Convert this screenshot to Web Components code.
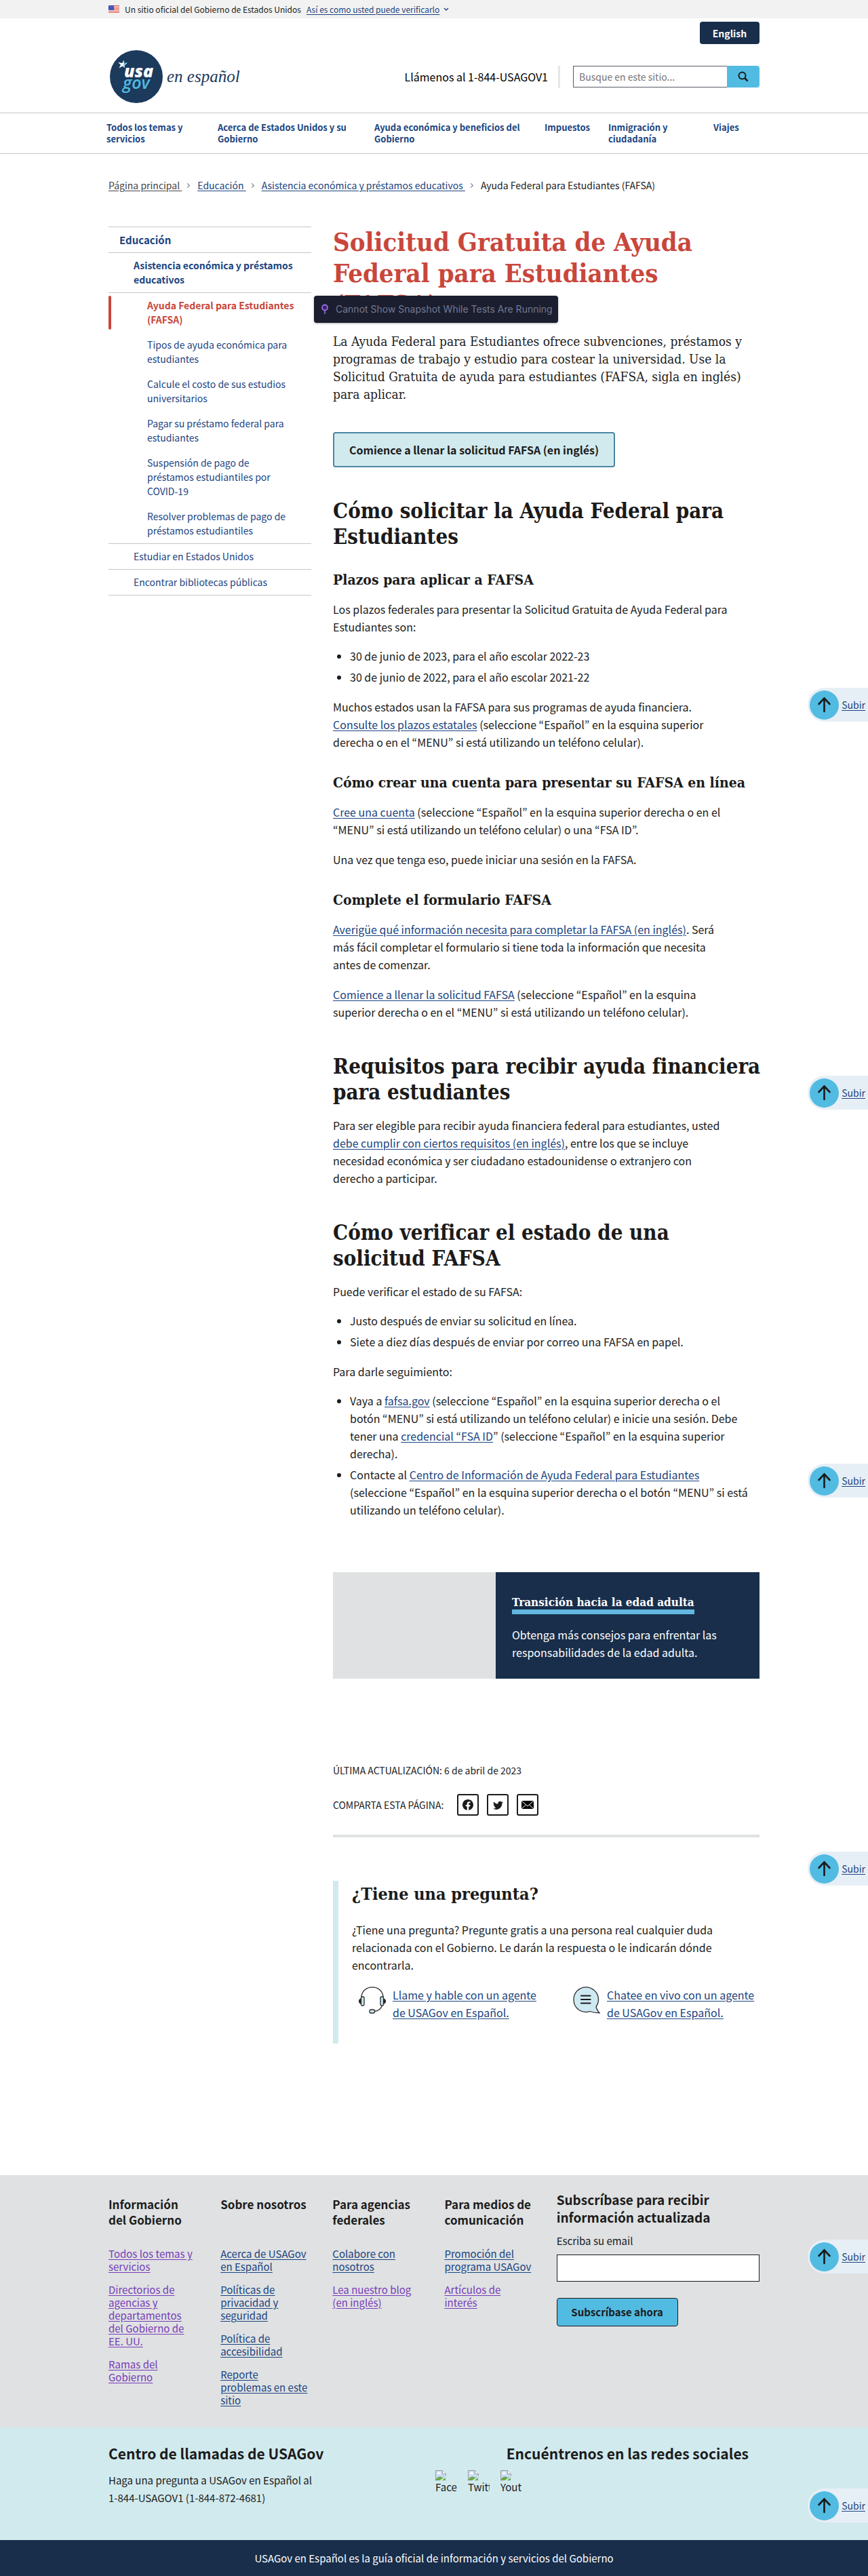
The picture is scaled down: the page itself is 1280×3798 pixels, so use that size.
<!DOCTYPE html>
<html lang="es">
<head>
<meta charset="utf-8">
<title>Solicitud Gratuita de Ayuda Federal para Estudiantes (FAFSA) | USAGov en Español</title>
<meta name="viewport" content="width=device-width, initial-scale=1">
<style>
  :root {
    --ink: #1b1b1b;
    --link: #1a4480;
    --visited: #783cb9;
    --navy: #182e4b;
    --sky: #52bbe2;
    --pale: #d1eaee;
    --red: #c9463b;
    --grey: #dfe1e2;
    --rule: #c6c6c6;
    --sans: "Noto Sans CJK JP", "Open Sans", sans-serif;
    --serif: "DejaVu Serif Condensed", "DejaVu Serif", serif;
    --wrap: 960px;
  }
  body { margin: 0; background: #fff; color: var(--ink); font-family: var(--sans); font-size: 16px; line-height: 26px; }
</style>
</head>
<body>
<usa-page>
  <usa-banner></usa-banner>
  <site-header></site-header>
  <site-nav></site-nav>
  <bread-crumbs></bread-crumbs>
  <page-columns>
    <side-nav slot="side"></side-nav>
    <fafsa-article></fafsa-article>
    <promo-card href="#adulta">
      <span slot="title">Transición hacia la edad adulta</span>
      Obtenga más consejos para enfrentar las responsabilidades de la edad adulta.
    </promo-card>
    <share-bar></share-bar>
    <question-box></question-box>
  </page-columns>
  <site-footer></site-footer>
  <back-to-top style="top:1014px">Subir</back-to-top>
  <back-to-top style="top:1586px">Subir</back-to-top>
  <back-to-top style="top:2158px">Subir</back-to-top>
  <back-to-top style="top:2730px">Subir</back-to-top>
  <back-to-top style="top:3302px">Subir</back-to-top>
  <back-to-top style="bottom:80px">Subir</back-to-top>
</usa-page>

<script>
const BASE = `
  *, *::before, *::after { box-sizing: border-box; }
  :host { display: block; }
  h1, h2, h3, h4, p, ul, ol { margin: 0; padding: 0; }
  ul, ol { list-style: none; }
  a { color: var(--link); text-underline-offset: 2px; }
  a.v { color: var(--visited); }
  button, input { font: inherit; margin: 0; }
  svg { display: block; }
  .wrap { width: 100%; max-width: var(--wrap); margin: 0 auto; }
`;
function define(name, css, html) {
  const tpl = document.createElement('template');
  tpl.innerHTML = `<style>${BASE}${css}</style>${html}`;
  customElements.define(name, class extends HTMLElement {
    constructor() {
      super();
      this.attachShadow({ mode: 'open' }).append(tpl.content.cloneNode(true));
    }
    connectedCallback() {
      const a = this.shadowRoot.querySelector('a[data-host]');
      if (a && this.hasAttribute('href')) a.href = this.getAttribute('href');
    }
  });
}

define('usa-page', `:host { position: relative; overflow: hidden; }`, `<slot></slot>`);

define('usa-banner', `
  :host { background: #f2f2f2; }
  .wrap { display: flex; align-items: center; height: 27px; font-size: 12px; line-height: 16px; }
  .flag { margin-right: 8px; }
  a { margin-left: 8px; }
  .chev { margin-left: 6px; }
`, `
  <div class="wrap">
    <svg class="flag" width="16" height="12" viewBox="0 0 16 12" aria-hidden="true">
      <path fill="#fff" d="M0 0h16v12H0z"/>
      <path stroke="#db5040" stroke-width="1" d="M0 .5h16M0 2.5h16M0 4.5h16M0 6.5h16M0 8.5h16M0 10.5h16"/>
      <path fill="#2236a8" d="M0 0h8v7H0z"/>
      <path stroke="#fff" stroke-width=".8" stroke-dasharray="1 1.3" d="M1 1.5h6M2 3.5h6M1 5.5h6"/>
    </svg>
    <span>Un sitio oficial del Gobierno de Estados Unidos</span>
    <a href="#verificar">Así es como usted puede verificarlo</a>
    <svg class="chev" width="8" height="6" viewBox="0 0 8 6" aria-hidden="true"><path d="M1 1l3 3 3-3" fill="none" stroke="#1a4480" stroke-width="1.4"/></svg>
  </div>`);

define('usa-logo', `
  a { display: flex; align-items: center; text-decoration: none; }
  .esp { margin-left: 6px; font: italic 25px/32px "Liberation Serif", serif; color: #1c3a5c; }
  .t { font-family: "Open Sans", sans-serif; font-style: italic; font-weight: 800; }
`, `
  <a href="#inicio" aria-label="USAGov en Español, página principal">
    <svg width="78" height="78" viewBox="0 0 78 78">
      <circle cx="39" cy="39" r="39" fill="#1c3a5c"/>
      <path fill="#fff" d="M12 18l6.500 1 2-4.500 1 5 4.500-1-4 3.500 0 4-3.500-2.500-5 3 2.500-5z"/>
      <path fill="#52bbe2" d="M20.500 14l.8 5 4.200-.8-4 3.400.1 4.200-1.200-1z"/>
      <text class="t" x="21" y="40" font-size="25" fill="#fff">usa</text>
      <text class="t" x="19" y="57" font-size="25" fill="#52bbe2" style="font-weight:600">gov</text>
    </svg>
    <span class="esp">en español</span>
  </a>`);

define('site-header', `
  .wrap { padding: 5px 0 14px; }
  .top { display: flex; justify-content: flex-end; }
  .lang { display: flex; align-items: center; justify-content: center; width: 88px; height: 33px; border: 0; border-radius: 4px; background: var(--navy); color: #fff; font-weight: 700; font-size: 14px; cursor: pointer; }
  .row { display: flex; align-items: center; margin-top: 9px; padding-left: 2px; }
  .tel { margin-left: auto; font-size: 16px; color: #000; padding-right: 15px; }
  form { display: flex; margin-left: 19px; width: 275px; height: 32px; }
  .bar { width: 3px; height: 33px; background: #e6e6e6; }
  input { flex: 1; min-width: 0; border: 1px solid #565c65; border-right: 0; border-radius: 0; padding: 0 8px; font-size: 14px; background: #fff; color: var(--ink); }
  input::placeholder { color: #757575; opacity: 1; }
  form button { display: flex; align-items: center; justify-content: center; width: 48px; border: 0; border-radius: 0 4px 4px 0; background: var(--sky); padding: 0; }
`, `
  <header class="wrap">
    <div class="top"><button class="lang" type="button" lang="en">English</button></div>
    <div class="row">
      <usa-logo></usa-logo>
      <span class="tel">Llámenos al 1-844-USAGOV1</span>
      <span class="bar"></span>
      <form role="search">
        <input type="search" aria-label="Busque en este sitio" placeholder="Busque en este sitio...">
        <button type="button" aria-label="Buscar">
          <svg width="18" height="18" viewBox="0 0 18 18" fill="none" stroke="#1b1b1b" stroke-width="2"><circle cx="7.500" cy="7.500" r="5"/><path stroke-width="2.500" d="M11.200 11.200l4.300 4.300"/></svg>
        </button>
      </form>
    </div>
  </header>`);

define('site-nav', `
  :host { border-top: 1px solid var(--rule); border-bottom: 1px solid var(--rule); }
  ul { display: grid; grid-template-columns: 164fr 231fr 251fr 94fr 155fr 71fr; max-width: 966px; margin: 0 auto; padding: 12px 0 13px; font-size: 13px; line-height: 17px; font-weight: 700; }
  a { display: block; text-decoration: none; }
  .a { max-width: 130px; } .b { max-width: 220px; } .c { max-width: 230px; } .e { max-width: 100px; }
`, `
  <nav aria-label="Principal"><ul>
    <li><a class="a" href="#temas">Todos los temas y servicios</a></li>
    <li><a class="b" href="#acerca">Acerca de Estados Unidos y su Gobierno</a></li>
    <li><a class="c" href="#ayuda">Ayuda económica y beneficios del Gobierno</a></li>
    <li><a href="#impuestos">Impuestos</a></li>
    <li><a class="e" href="#inmigracion">Inmigración y ciudadanía</a></li>
    <li><a href="#viajes">Viajes</a></li>
  </ul></nav>`);

define('bread-crumbs', `
  ol { display: flex; align-items: center; padding-top: 33px; font-size: 14px; line-height: 26px; white-space: pre; }
  li { display: flex; align-items: center; }
  li + li::before { content: ""; width: 5px; height: 5px; margin: 0 12px 0 6px; border: solid #71767a; border-width: 1px 1px 0 0; transform: rotate(45deg); }
  .home { color: #454545; }
`, `
  <nav class="wrap" aria-label="Ruta de navegación"><ol>
    <li><a class="home" href="#inicio">Página principal </a></li>
    <li><a href="#educacion">Educación </a></li>
    <li><a href="#asistencia">Asistencia económica y préstamos educativos </a></li>
    <li aria-current="page">Ayuda Federal para Estudiantes (FAFSA)</li>
  </ol></nav>`);

define('page-columns', `
  .wrap { display: grid; grid-template-columns: 299fr 629fr; column-gap: 32px; align-items: start; padding-top: 48px; }
  .main { position: relative; min-width: 0; }
`, `
  <div class="wrap">
    <slot name="side"></slot>
    <main class="main"><slot></slot></main>
  </div>`);

define('side-nav', `
  :host { font-size: 14px; line-height: 21px; }
  li { border-top: 1px solid var(--rule); }
  nav > ul { border-bottom: 1px solid var(--rule); }
  a { display: block; padding: 8px 16px; text-decoration: none; }
  ul ul a { padding-left: 37px; padding-right: 21px; }
  ul ul ul a { padding-left: 57px; }
  ul ul ul li { border: 0; }
  ul ul ul { border-top: 1px solid var(--rule); }
  .b { font-weight: 700; }
  .on { position: relative; color: var(--red); font-weight: 700; }
  .on::before { content: ""; position: absolute; left: 0; top: 4px; bottom: 4px; width: 4px; border-radius: 2px; background: var(--red); }
  .top { font-size: 15px; }
`, `
  <nav aria-label="Secundaria"><ul>
    <li><a class="b top" href="#educacion">Educación</a>
      <ul>
        <li><a class="b" href="#asistencia">Asistencia económica y préstamos educativos</a>
          <ul>
            <li><a class="on" aria-current="page" href="#fafsa">Ayuda Federal para Estudiantes (FAFSA)</a></li>
            <li><a href="#tipos">Tipos de ayuda económica para estudiantes</a></li>
            <li><a href="#costo">Calcule el costo de sus estudios universitarios</a></li>
            <li><a href="#pagar">Pagar su préstamo federal para estudiantes</a></li>
            <li><a href="#covid">Suspensión de pago de préstamos estudiantiles por COVID-19</a></li>
            <li><a href="#problemas">Resolver problemas de pago de préstamos estudiantiles</a></li>
          </ul>
        </li>
        <li><a href="#estudiar">Estudiar en Estados Unidos</a></li>
        <li><a href="#bibliotecas">Encontrar bibliotecas públicas</a></li>
      </ul>
    </li>
  </ul></nav>`);

define('snapshot-tip', `
  :host { display: flex; align-items: center; gap: 11px; height: 40px; padding: 0 8px 0 11px; border-radius: 4px; background: #1b1e2e; box-shadow: 0 1px 3px rgba(0,0,0,.3); color: #747994; font: 14px/20px Inter, sans-serif; white-space: nowrap; }
`, `
  <svg width="10" height="16" viewBox="0 0 10 16" fill="none" stroke="#9b6fe0" aria-hidden="true"><circle cx="5" cy="5.500" r="4" stroke-width="1.800" fill="#3b1f73"/><path stroke-width="1.600" d="M5 10v5"/></svg>
  <slot></slot>`);

define('fafsa-article', `
  h1, h2, h3, .lead { font-family: var(--serif); }
  h1 { color: var(--red); font-size: 38px; line-height: 46px; }
  h2 { font-size: 31px; line-height: 38px; margin-top: 48px; margin-right: -8px; }
  h3 { font-size: 21px; line-height: 26px; margin-top: 34px; }
  p { margin-top: 18px; max-width: 584px; }
  .lead { margin-top: 18px; max-width: none; font-size: 19px; }
  h2 + p, h3 + p { margin-top: 17px; }
  h2 + h3 { margin-top: 32px; }
  ul { list-style: disc; padding-left: 25px; margin-top: 17px; }
  li { max-width: 590px; }
  li + li { margin-top: 5px; }
  .cta { display: flex; align-items: center; width: fit-content; height: 52px; margin-top: 43px; padding: 0 22px; border: 2px solid #4c86a3; border-radius: 4px; background: var(--pale); color: var(--ink); font-weight: 700; text-decoration: none; }
  .cta + h2 { margin-top: 45px; }
  .title { position: relative; }
  snapshot-tip { position: absolute; left: -28px; top: 102px; }
`, `
  <article>
    <div class="title">
      <h1>Solicitud Gratuita de Ayuda Federal para Estudiantes (FAFSA)</h1>
      <snapshot-tip role="status">Cannot Show Snapshot While Tests Are Running</snapshot-tip>
    </div>
    <p class="lead">La Ayuda Federal para Estudiantes ofrece subvenciones, préstamos y programas de trabajo y estudio para costear la universidad. Use la Solicitud Gratuita de ayuda para estudiantes (FAFSA, sigla en inglés) para aplicar.</p>
    <a class="cta" href="#solicitud">Comience a llenar la solicitud FAFSA (en inglés)</a>
    <h2>Cómo solicitar la Ayuda Federal para Estudiantes</h2>
    <h3>Plazos para aplicar a FAFSA</h3>
    <p>Los plazos federales para presentar la Solicitud Gratuita de Ayuda Federal para Estudiantes son:</p>
    <ul><li>30 de junio de 2023, para el año escolar 2022-23</li><li>30 de junio de 2022, para el año escolar 2021-22</li></ul>
    <p>Muchos estados usan la FAFSA para sus programas de ayuda financiera. <a href="#plazos">Consulte los plazos estatales</a> (seleccione “Español” en la esquina superior derecha o en el “MENU” si está utilizando un teléfono celular).</p>
    <h3>Cómo crear una cuenta para presentar su FAFSA en línea</h3>
    <p><a href="#cuenta">Cree una cuenta</a> (seleccione “Español” en la esquina superior derecha o en el “MENU” si está utilizando un teléfono celular) o una “FSA ID”.</p>
    <p>Una vez que tenga eso, puede iniciar una sesión en la FAFSA.</p>
    <h3>Complete el formulario FAFSA</h3>
    <p><a href="#info">Averigüe qué información necesita para completar la FAFSA (en inglés)</a>. Será más fácil completar el formulario si tiene toda la información que necesita antes de comenzar.</p>
    <p><a href="#solicitud">Comience a llenar la solicitud FAFSA</a> (seleccione “Español” en la esquina superior derecha o en el “MENU” si está utilizando un teléfono celular).</p>
    <h2>Requisitos para recibir ayuda financiera para estudiantes</h2>
    <p>Para ser elegible para recibir ayuda financiera federal para estudiantes, usted <a href="#requisitos">debe cumplir con ciertos requisitos (en inglés)</a>, entre los que se incluye necesidad económica y ser ciudadano estadounidense o extranjero con derecho a participar.</p>
    <h2>Cómo verificar el estado de una solicitud FAFSA</h2>
    <p>Puede verificar el estado de su FAFSA:</p>
    <ul><li>Justo después de enviar su solicitud en línea.</li><li>Siete a diez días después de enviar por correo una FAFSA en papel.</li></ul>
    <p>Para darle seguimiento:</p>
    <ul><li>Vaya a <a href="#fafsagov">fafsa.gov</a> (seleccione “Español” en la esquina superior derecha o el botón “MENU” si está utilizando un teléfono celular) e inicie una sesión. Debe tener una <a href="#fsaid">credencial “FSA ID</a>” (seleccione “Español” en la esquina superior derecha).</li><li>Contacte al <a href="#centro">Centro de Información de Ayuda Federal para Estudiantes</a> (seleccione “Español” en la esquina superior derecha o el botón “MENU” si está utilizando un teléfono celular).</li></ul>
  </article>`);

define('promo-card', `
  :host { display: grid; grid-template-columns: 240fr 389fr; margin-top: 79px; background: var(--navy); color: #fff; }
  .pic { background: var(--grey); }
  .body { padding: 33px 24px 26px; }
  h3 { display: flex; font-family: var(--serif); font-size: 17px; line-height: 22px; }
  h3 a { display: block; border-bottom: 7px solid #62b7e0; color: #fff; text-decoration: none; }
  p { margin-top: 17px; max-width: 320px; }
`, `
  <div class="pic"></div>
  <div class="body">
    <h3><a data-host href="#"><slot name="title"></slot></a></h3>
    <p><slot></slot></p>
  </div>`);

define('share-bar', `
  :host { margin-top: 122px; font-size: 14px; }
  .row { display: flex; align-items: center; gap: 12px; margin-top: 22px; padding-bottom: 28px; border-bottom: 4px solid var(--grey); }
  .row span { margin-right: 8px; }
  a { display: flex; align-items: center; justify-content: center; width: 32px; height: 32px; border: 2px solid var(--ink); border-radius: 3px; }
`, `
  <p>ÚLTIMA ACTUALIZACIÓN: 6 de abril de 2023</p>
  <div class="row">
    <span>COMPARTA ESTA PÁGINA:</span>
    <a href="#facebook" aria-label="Facebook"><svg width="16" height="16" viewBox="0 0 24 24" fill="#1b1b1b"><path d="M24 12.070C24 5.410 18.630 0 12 0S0 5.400 0 12.070C0 18.100 4.390 23.100 10.130 24v-8.440H7.080v-3.490h3.040V9.410c0-3.020 1.800-4.700 4.540-4.700 1.310 0 2.680.24 2.680.24v2.970h-1.500c-1.500 0-1.960.93-1.960 1.890v2.260h3.320l-.53 3.500h-2.800V24C19.620 23.100 24 18.100 24 12.070"/></svg></a>
    <a href="#twitter" aria-label="Twitter"><svg width="17" height="17" viewBox="0 0 24 24" fill="#1b1b1b"><path d="M22.460 6c-.77.35-1.600.58-2.460.69.88-.53 1.560-1.370 1.880-2.380-.83.5-1.750.85-2.720 1.050C18.370 4.500 17.260 4 16 4c-2.350 0-4.270 1.920-4.270 4.290 0 .34.040.67.110.98C8.280 9.090 5.110 7.380 3 4.790c-.37.63-.58 1.370-.58 2.150 0 1.490.75 2.810 1.910 3.560-.71 0-1.370-.2-1.950-.5v.03c0 2.080 1.480 3.820 3.440 4.210a4.220 4.220 0 0 1-1.930.07 4.280 4.280 0 0 0 4 2.980 8.521 8.521 0 0 1-5.330 1.840c-.34 0-.68-.02-1.020-.06C3.440 20.290 5.700 21 8.120 21 16 21 20.330 14.460 20.330 8.790c0-.19 0-.37-.01-.56.84-.6 1.560-1.360 2.140-2.230z"/></svg></a>
    <a href="#correo" aria-label="Correo electrónico"><svg width="18" height="14" viewBox="0 0 18 14"><path fill="#000" d="M0 1h18v12H0z"/><path fill="none" stroke="#fff" d="M0 1l9 8 9-8M0 13l6.500-6M18 13l-6.500-6"/></svg></a>
  </div>`);

define('question-box', `
  :host { margin-top: 64px; border-left: 8px solid var(--pale); padding: 4px 0 33px 20px; }
  h2 { font-family: var(--serif); font-size: 25px; line-height: 32px; }
  p { margin-top: 23px; max-width: 560px; }
  .row { display: flex; justify-content: space-between; margin-top: 18px; padding: 0 5px 0 10px; }
  .item { display: flex; align-items: flex-start; gap: 10px; }
  .item a { max-width: 220px; }
  svg { flex: none; margin-top: 1px; }
`, `
  <h2>¿Tiene una pregunta?</h2>
  <p>¿Tiene una pregunta? Pregunte gratis a una persona real cualquier duda relacionada con el Gobierno. Le darán la respuesta o le indicarán dónde encontrarla.</p>
  <div class="row">
    <div class="item">
      <svg width="40" height="40" viewBox="0 0 40 40" fill="none" stroke="#2a2a2a" stroke-width="1.300" aria-hidden="true">
        <path d="M4 17V14C5 6 12 .8 20 .8S35 6 36 14v3M35 27c-2 6-6 9-12 9.500"/>
        <rect x="3.500" y="15" width="4.500" height="13" rx="1.500" fill="#c9e8f0"/><rect x="32" y="15" width="4.500" height="13" rx="1.500" fill="#c9e8f0"/>
        <path fill="#2a2a2a" d="M3 18c-2 1-2.500 2-2.500 3.500S1 24 3 25zM37 18c2 1 2.500 2 2.500 3.500S39 24 37 25z"/>
        <rect x="16" y="34" width="7.500" height="5" rx="2" fill="#c9e8f0"/>
      </svg>
      <a href="#llame">Llame y hable con un agente de USAGov en Español.</a>
    </div>
    <div class="item">
      <svg width="40" height="40" viewBox="0 0 40 40" aria-hidden="true">
        <path fill="#cfe9f3" stroke="#2a2a2a" stroke-width="1.300" d="M25 36.500C14 40.500 1 33 1 19 1 9 9 .8 19 .8S37.500 9 37.500 19c0 5-1.500 8-3.500 10.500 1 4 2.500 7 5 9.300-5 0-10-.8-14-2.300z"/>
        <path stroke="#1b1b1b" stroke-width="2.200" stroke-linecap="round" d="M12 13.500h13.500M12 19h13.500M12 24.500h13.500"/>
      </svg>
      <a href="#chatee">Chatee en vivo con un agente de USAGov en Español.</a>
    </div>
  </div>`);

define('broken-image', `
  :host { width: 32px; height: 32px; overflow: hidden; font-size: 15px; line-height: 17px; white-space: nowrap; }
`, `
  <svg width="16" height="16" viewBox="0 0 16 16" aria-hidden="true">
    <path fill="#c9dcf7" d="M.5.500h10l5 5v10H.5z"/>
    <path fill="#fff" d="M2.500 5.500a1.500 1.500 0 0 1 1.500-2 2 2 0 0 1 3.500.5 1.200 1.200 0 0 1 0 2h-4z"/>
    <path fill="#6aaa45" d="M1 15v-2c3-4 7-4.500 9-2l5-2v6z"/>
    <path fill="none" stroke="#9a9a9a" d="M.5 15.500V.5h10l5 5v4"/>
    <path fill="#fff" stroke="#9a9a9a" d="M10.500.500v5h5"/>
    <path fill="#d1eaee" d="M5 16l11-8v2.500L8.500 16z"/>
  </svg>
  <slot></slot>`);

define('site-footer', `
  :host { margin-top: 194px; }
  .grey { background: var(--grey); }
  .cols { display: grid; grid-template-columns: repeat(4, 133fr) 299fr; column-gap: 32px; min-height: 372px; padding: 31px 0; }
  .cols > * { min-width: 0; }
  h3 { font-size: 17px; line-height: 23px; min-height: 46px; }
  .links { margin-top: 29px; font-size: 15px; line-height: 19px; }
  .links li + li { margin-top: 15px; }
  .big { font-size: 19px; line-height: 26px; min-height: 0; margin-top: -8px; }
  label { display: block; margin-top: 11px; line-height: 22px; font-size: 15px; }
  input { display: block; width: 100%; height: 40px; margin-top: 9px; border: 1px solid var(--ink); border-radius: 0; background: #fff; padding: 8px; }
  .sub { display: block; width: 179px; height: 42px; margin-top: 24px; border: 1px solid var(--ink); border-radius: 4px; background: var(--sky); color: var(--ink); font-size: 15px; font-weight: 700; padding: 0; }
  .blue { background: var(--pale); }
  .call { display: flex; justify-content: space-between; min-height: 166px; padding-top: 22px; }
  .call h2 { font-size: 21px; line-height: 32px; }
  .call p { margin-top: 11px; max-width: 310px; font-size: 15px; }
  .tel { white-space: nowrap; }
  .social { width: 478px; }
  .social h2 { text-align: right; padding-right: 16px; }
  .social ul { display: flex; gap: 16px; margin-top: 9px; }
  .navy { background: var(--navy); color: #fff; text-align: center; padding: 14px; font-size: 15px; }
`, `
  <footer>
    <div class="grey"><div class="wrap cols">
      <section><h3>Información del&nbsp;Gobierno</h3><ul class="links">
        <li><a class="v" href="#temas">Todos los temas y servicios</a></li>
        <li><a class="v" href="#directorios">Directorios de agencias y departamentos del&nbsp;Gobierno de EE.&nbsp;UU.</a></li>
        <li><a class="v" href="#ramas">Ramas del Gobierno</a></li></ul></section>
      <section><h3>Sobre nosotros</h3><ul class="links">
        <li><a href="#usagov">Acerca de USAGov en Español</a></li>
        <li><a href="#privacidad">Políticas de privacidad y seguridad</a></li>
        <li><a href="#accesibilidad">Política de accesibilidad</a></li>
        <li><a href="#reporte">Reporte problemas en este sitio</a></li></ul></section>
      <section><h3>Para agencias federales</h3><ul class="links">
        <li><a href="#colabore">Colabore con nosotros</a></li>
        <li><a class="v" href="#blog">Lea nuestro blog (en&nbsp;inglés)</a></li></ul></section>
      <section><h3>Para medios de comunicación</h3><ul class="links">
        <li><a href="#promocion">Promoción del programa USAGov</a></li>
        <li><a class="v" href="#articulos">Artículos de interés</a></li></ul></section>
      <form>
        <h3 class="big">Subscríbase para recibir información actualizada</h3>
        <label for="email">Escriba su email</label>
        <input id="email" type="email">
        <button class="sub" type="button">Subscríbase ahora</button>
      </form>
    </div></div>
    <div class="blue"><div class="wrap call">
      <section><h2>Centro de llamadas de USAGov</h2>
        <p>Haga una pregunta a USAGov en Español al <span class="tel">1-844-USAGOV1 (1-844-872-4681)</span></p></section>
      <section class="social"><h2>Encuéntrenos en las redes sociales</h2>
        <ul><li><broken-image>Facebook</broken-image></li><li><broken-image>Twitter</broken-image></li><li><broken-image>Youtube</broken-image></li></ul></section>
    </div></div>
    <div class="navy">USAGov en Español es la guía oficial de información y servicios del Gobierno</div>
  </footer>`);

define('back-to-top', `
  :host { position: absolute; right: 0; }
  a { display: flex; align-items: center; gap: 4px; height: 50px; padding: 0 4px 0 3px; border-radius: 25px 0 0 25px; background: #e7eff6; font-size: 14px; }
`, `
  <a href="#inicio">
    <svg width="43" height="43" viewBox="0 0 43 43" aria-hidden="true"><circle cx="21.500" cy="21.500" r="21.500" fill="#52bbe2"/><path d="M21.500 31V12M13.500 20l8-8.500 8 8.500" fill="none" stroke="#1b1b1b" stroke-width="2.600" stroke-linecap="round"/></svg>
    <slot></slot>
  </a>`);
</script>
</body>
</html>
